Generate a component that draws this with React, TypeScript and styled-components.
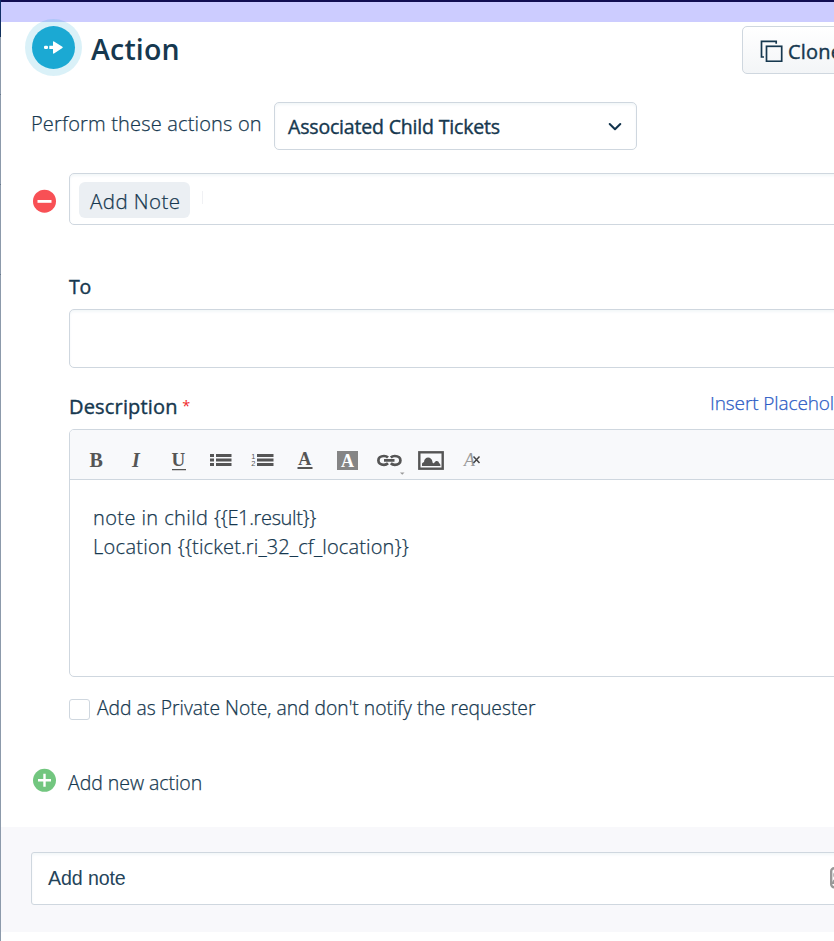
import React from "react";
import styled, { createGlobalStyle } from "styled-components";

const ink = "#16384f";
const line = "#cfd7df";

const GlobalStyle = createGlobalStyle`
  * { box-sizing: border-box; }
  html, body { margin: 0; padding: 0; overflow: hidden; background: #fff; }
  body { font-family: "Open Sans", "Noto Sans", sans-serif; color: ${ink}; }
  svg { flex: none; }
`;

const Page = styled.div`
  display: flex;
  width: 834px;
  height: 941px;
  overflow: hidden;
`;

const Rail = styled.div`
  flex: none;
  width: 1px;
  background: linear-gradient(#122f6c 0, #10305c 37px, #8c9aab 37px, #8c9aab 94px, #66788c 94px, #66788c 95px,
    #8c9aab 95px, #8c9aab 184px, #66788c 184px, #66788c 185px, #8c9aab 185px, #8c9aab 274px,
    #66788c 274px, #66788c 275px, #8c9aab 275px);
`;

const Panel = styled.main`
  flex: none;
  width: 833px;
  overflow: hidden;
`;

const TopBar = styled.div`
  height: 22px;
  border-top: 2px solid #120e52;
  background: #ccccff;
`;

const Label = styled.span<{ $size: number; $strong?: boolean; $spacing?: number; $shift?: number }>`
  display: block;
  white-space: nowrap;
  font-size: ${(p) => p.$size}px;
  font-weight: ${(p) => (p.$strong ? 400 : 300)};
  -webkit-text-stroke: ${(p) => (p.$strong ? 0.4 : 0.25)}px currentColor;
  letter-spacing: ${(p) => p.$spacing ?? 0}px;
  line-height: 28px;
  margin-top: ${(p) => p.$shift ?? 0}px;
`;

const Placeholder = styled.span<{ $spacing: number }>`
  letter-spacing: ${(p) => p.$spacing}px;
`;

const Header = styled.header`
  display: flex;
  align-items: flex-start;
  height: 80px;
  padding-left: 24px;
`;

const Badge = styled.div`
  flex: none;
  display: grid;
  place-items: center;
  width: 57px;
  height: 57px;
  margin-top: -3px;
  border-radius: 50%;
  background: rgba(27, 170, 211, 0.16);
`;

const BadgeCore = styled.div`
  display: grid;
  place-items: center;
  width: 43px;
  height: 43px;
  border-radius: 50%;
  background: #1ba9d3;
`;

const Title = styled.h1`
  flex: 1;
  margin: 8px 0 0 9px;
  font-size: 28.5px;
  font-weight: 600;
  line-height: 38px;
  letter-spacing: 0.2px;
`;

const CloneButton = styled.div`
  flex: none;
  display: flex;
  align-items: center;
  gap: 5px;
  width: 130px;
  height: 48px;
  margin: 4px -38px 0 0;
  padding-left: 17px;
  border: 1px solid ${line};
  border-radius: 5px;
  background: linear-gradient(#fff, #f3f5f7);
`;

const ScopeRow = styled.div`
  display: flex;
  height: 48px;
  padding-left: 30px;
`;

const ScopeLabel = styled.div`
  width: 243px;
  padding-top: 8px;
`;

const Select = styled.div`
  display: flex;
  align-items: center;
  justify-content: space-between;
  width: 363px;
  height: 48px;
  padding: 0 13px;
  border: 1px solid ${line};
  border-radius: 5px;
  box-shadow: inset 0 2px 3px #f3f7f9;
`;

const ActionRow = styled.div`
  display: flex;
  align-items: center;
  height: 52px;
  margin-top: 23px;
  padding-left: 31px;
`;

const ActionInput = styled.div`
  flex: none;
  display: flex;
  align-items: center;
  gap: 12px;
  width: 800px;
  height: 52px;
  margin-left: 12px;
  padding: 2px 0 0 9px;
  border: 1px solid ${line};
  border-radius: 5px;
  box-shadow: inset 0 2px 3px #f3f7f9;
`;

const Chip = styled.div`
  width: 111px;
  height: 36px;
  padding: 5px 0 0 11px;
  border-radius: 6px;
  background: #ebeff3;
`;

const Caret = styled.div`
  width: 1px;
  height: 13px;
  margin-top: -5px;
  background: #f0f1f4;
`;

const Form = styled.section`
  width: 900px;
  padding: 48px 0 0 68px;
`;

const ToInput = styled.div`
  height: 59px;
  margin-top: 8px;
  border: 1px solid ${line};
  border-radius: 5px;
  box-shadow: inset 0 2px 3px #f3f7f9;
`;

const DescriptionHead = styled.div`
  display: flex;
  height: 61px;
  padding-top: 25px;
`;

const DescriptionName = styled.div`
  display: flex;
  gap: 4.5px;
  width: 641px;
`;

const Required = styled.span`
  font-size: 14.5px;
  line-height: 26px;
  color: #f02a2a;
`;

const LinkText = styled(Label)`
  color: #2c5cc5;
`;

const Editor = styled.div`
  height: 248px;
  border: 1px solid ${line};
  border-radius: 5px;
  overflow: hidden;
`;

const Toolbar = styled.div`
  height: 50px;
  border-bottom: 1px solid ${line};
  background: #f8f9fb;
`;

const Note = styled.div`
  padding: 24px 0 0 23px;
`;

const CheckRow = styled.div`
  display: flex;
  gap: 7px;
  height: 28px;
  margin-top: 17px;
`;

const CheckBox = styled.div`
  width: 21px;
  height: 21px;
  margin-top: 5px;
  border: 1px solid ${line};
  border-radius: 3px;
`;

const AddRow = styled.div`
  display: flex;
  gap: 11px;
  height: 59px;
  margin-top: 46px;
  padding-left: 31px;
`;

const Footer = styled.footer`
  height: 105px;
  padding: 25px 0 0 30px;
  background: #f8f8fb;
`;

const NoteInput = styled.div`
  display: flex;
  align-items: center;
  justify-content: space-between;
  width: 850px;
  height: 53px;
  padding: 0 24px 1px 16px;
  border: 1px solid ${line};
  border-radius: 3px;
  background: #fff;
  box-shadow: inset 0 2px 3px #f3f7f9;
  font: 19.6px/28px "Liberation Sans", Arial, sans-serif;
  letter-spacing: -0.1px;
  color: #25445a;
`;

const ArrowIcon = () => (
  <svg width="21" height="15" viewBox="0 0 21 15" fill="#fff">
    <rect x="1" y="5.7" width="4" height="3.4" rx="1.3" />
    <path d="M6.3 5.8H10V2Q10 .8 11 1.4L19.4 6.7Q20.2 7.4 19.4 8.1L11 13.5Q10 14 10 12.7V9H6.3Z" />
  </svg>
);

const CopyIcon = () => (
  <svg width="23" height="23" viewBox="0 0 23 23" fill="none" stroke={ink} strokeWidth="1.7">
    <path d="M4 18H1.5V2.3H16.2V4.8" />
    <rect x="6.5" y="7.3" width="15.2" height="15" />
  </svg>
);

const ChevronIcon = () => (
  <svg width="16" height="12" viewBox="0 0 16 12" fill="none" stroke="#12344d" strokeWidth="2">
    <path d="M2.7 4 8 9.3 13.3 4" strokeLinecap="round" strokeLinejoin="round" />
  </svg>
);

const RoundIcon = styled.svg<{ $drop?: number }>`
  margin-top: ${(p) => p.$drop ?? 0}px;
`;

const MinusIcon = () => (
  <RoundIcon $drop={4} width="25" height="25" viewBox="0 0 25 25">
    <circle cx="12.5" cy="12.2" r="11.5" fill="#f85055" />
    <path d="M5.5 12.4h14" stroke="#fff" strokeWidth="2.8" />
  </RoundIcon>
);

const PlusIcon = () => (
  <RoundIcon width="25" height="25" viewBox="0 0 25 25">
    <circle cx="12.5" cy="12.3" r="11.5" fill="#72c67f" />
    <path d="M6 12.3h13M12.5 5.8v13" stroke="#fff" strokeWidth="2.4" />
  </RoundIcon>
);

const ContactIcon = () => (
  <svg width="26" height="22" viewBox="0 0 26 22" fill="none" stroke="#989898" strokeWidth="2.4">
    <rect x="1.2" y="1.2" width="23" height="19" rx="3" />
    <circle cx="7" cy="8" r="2.5" />
    <path d="M3 17q0-4 4-4t4 4" />
  </svg>
);

const ToolbarArt = styled.svg`
  display: block;
  font-family: "Liberation Serif", "Times New Roman", serif;
  font-weight: 700;
`;

const ToolbarIcons = () => (
  <ToolbarArt width="420" height="49" viewBox="70 430 420 49" fill="#555">
    <text x="89.5" y="467" fontSize="20">B</text>
    <text x="132" y="467" fontSize="20" fontStyle="italic">I</text>
    <text x="171.5" y="466" fontSize="19">U</text>
    <path d="M172 469h14v1.3h-14z" />
    <path d="M210 454h4v3h-4zm6 0h15.5v3h-15.5zM210 458.5h4v3h-4zm6 0h15.5v3h-15.5zM210 463h4v3h-4zm6 0h15.5v3h-15.5z" />
    <path d="M257 454h16.5v3h-16.5zm0 4.5h16.5v3h-16.5zm0 4.5h16.5v3h-16.5z" />
    <g fontFamily="Liberation Sans" fontSize="7.5" fontWeight="400">
      <text x="251.3" y="459">1</text>
      <text x="251.3" y="466.3">2</text>
    </g>
    <text x="298.3" y="465" fontSize="18">A</text>
    <path d="M297.5 467h15v2h-15z" />
    <path fill="#858585" d="M337 451h21v19h-21z" />
    <text x="341" y="467" fontSize="18" fill="#fff">A</text>
    <g fill="none" stroke="#555" strokeWidth="2.7">
      <path d="M388 463.3q-1.5 1.5-4 1.5c-7.5 0-7.5-8.8 0-8.8q2.5 0 4 1.5" />
      <path d="M390.8 463.3q1.5 1.5 4 1.5c7.5 0 7.5-8.8 0-8.8q-2.5 0-4 1.5" />
      <path d="M384 460.4h10.5" />
    </g>
    <path fill="#999" d="M400 472.5h4.5l-2.2 2.3z" />
    <rect x="419.3" y="452.3" width="23.4" height="16.4" fill="none" stroke="#555" strokeWidth="2.4" />
    <path d="M422 466v-2.5q1-1.5 2-1.5c.2-6 8-6 8.5 0 .2 2 1.5 1.2 2.2.3 1.5-2.4 4.3-1 4.3.8q1.5.5 1.5 2.9z" />
    <text x="464" y="466" fontSize="18" fontStyle="italic" fontWeight="400" fill="#999">A</text>
    <path d="m473.5 456.5 6 6.5m0-6.5-6 6.5" fill="none" stroke="#444" strokeWidth="1.5" />
  </ToolbarArt>
);

export default function App() {
  return (
    <Page>
      <GlobalStyle />
      <Rail />
      <Panel>
        <TopBar />
        <Header>
          <Badge><BadgeCore><ArrowIcon /></BadgeCore></Badge>
          <Title>Action</Title>
          <CloneButton>
            <CopyIcon />
            <Label $strong $size={20} $spacing={0.2} $shift={3}>Clone</Label>
          </CloneButton>
        </Header>
        <ScopeRow>
          <ScopeLabel><Label $size={20} $spacing={0.17}>Perform these actions on</Label></ScopeLabel>
          <Select>
            <Label $strong $size={19.5} $spacing={-0.18} $shift={2}>Associated Child Tickets</Label>
            <ChevronIcon />
          </Select>
        </ScopeRow>
        <ActionRow>
          <MinusIcon />
          <ActionInput>
            <Chip><Label $size={20.5} $spacing={0.45}>Add Note</Label></Chip>
            <Caret />
          </ActionInput>
        </ActionRow>
        <Form>
          <Label $strong $size={19.5} $spacing={-0.3}>To</Label>
          <ToInput />
          <DescriptionHead>
            <DescriptionName>
              <Label $strong $size={20} $spacing={0.17}>Description</Label>
              <Required>*</Required>
            </DescriptionName>
            <LinkText $size={19} $shift={-4} $spacing={-0.1}>Insert Placeholder</LinkText>
          </DescriptionHead>
          <Editor>
            <Toolbar><ToolbarIcons /></Toolbar>
            <Note>
              <Label $size={20} $spacing={0.4}>
                note in child <Placeholder $spacing={-0.35}>{"{{E1.result}}"}</Placeholder>
              </Label>
              <Label $size={20} $spacing={0.3} $shift={1}>
                Location <Placeholder $spacing={0.13}>{"{{ticket.ri_32_cf_location}}"}</Placeholder>
              </Label>
            </Note>
          </Editor>
          <CheckRow>
            <CheckBox />
            <Label $size={19.3}>Add as Private Note, and don't notify the requester</Label>
          </CheckRow>
        </Form>
        <AddRow>
          <PlusIcon />
          <Label $size={19.5} $spacing={-0.05} $shift={1}>Add new action</Label>
        </AddRow>
        <Footer>
          <NoteInput>Add note<ContactIcon /></NoteInput>
        </Footer>
      </Panel>
    </Page>
  );
}
